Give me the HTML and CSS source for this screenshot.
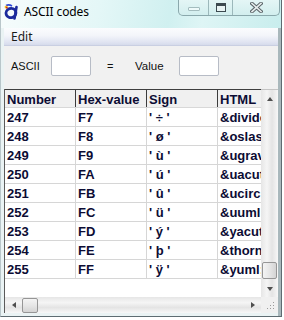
FILE: index.html
```html
<!DOCTYPE html>
<html>
<head>
<meta charset="utf-8">
<link rel="stylesheet" href="styles.css">
</head>
<body>
<div class="window">
  <div class="titlebar">
    <svg class="app-icon" width="18" height="17" viewBox="0 0 18 17">
      <ellipse cx="8" cy="10" rx="5" ry="4.6" transform="rotate(-20 8 10)" fill="none" stroke="#1b2a9c" stroke-width="2.8"/>
      <path d="M13.5 4 L11.5 15.5" stroke="#1b2a9c" stroke-width="2.6" stroke-linecap="round"/>
      <path d="M3 2.5 Q6 1 9 3" stroke="#2c46d8" stroke-width="1.6" fill="none"/>
      <circle cx="3.2" cy="4" r="1.6" fill="#f2c020"/>
      <circle cx="3.8" cy="4.6" r="0.9" fill="#d42020"/>
    </svg>
    <span class="title">ASCII codes</span>
    <div class="caption-btns">
      <div class="cbtn cbtn-min"><span class="min-glyph"></span></div>
      <div class="cbtn cbtn-max"><span class="max-glyph"></span></div>
      <div class="cbtn cbtn-close">
        <svg width="13" height="11" viewBox="0 0 13 11">
          <path d="M2 1.5 L11 9.5 M11 1.5 L2 9.5" stroke="#5a6468" stroke-width="3.6" stroke-linecap="square"/>
          <path d="M2 1.5 L11 9.5 M11 1.5 L2 9.5" stroke="#e8eeee" stroke-width="1.6" stroke-linecap="square"/>
        </svg>
      </div>
    </div>
  </div>
  <div class="frame">
    <div class="menubar"><span class="menu-item">Edit</span></div>
    <div class="form">
      <span class="lbl lbl-ascii">ASCII</span>
      <span class="box"></span>
      <span class="eq">=</span>
      <span class="lbl lbl-value">Value</span>
      <span class="box"></span>
    </div>
    <div class="grid-area">
      <div class="viewport">
        <div class="row head">
          <div class="cell">Number</div><div class="cell">Hex-value</div><div class="cell">Sign</div><div class="cell">HTML</div>
        </div>
        <div class="row"><div class="cell">247</div><div class="cell">F7</div><div class="cell">' ÷ '</div><div class="cell">&amp;divide;</div></div>
        <div class="row"><div class="cell">248</div><div class="cell">F8</div><div class="cell">' ø '</div><div class="cell">&amp;oslash;</div></div>
        <div class="row"><div class="cell">249</div><div class="cell">F9</div><div class="cell">' ù '</div><div class="cell">&amp;ugrave;</div></div>
        <div class="row"><div class="cell">250</div><div class="cell">FA</div><div class="cell">' ú '</div><div class="cell">&amp;uacute;</div></div>
        <div class="row"><div class="cell">251</div><div class="cell">FB</div><div class="cell">' û '</div><div class="cell">&amp;ucirc;</div></div>
        <div class="row"><div class="cell">252</div><div class="cell">FC</div><div class="cell">' ü '</div><div class="cell">&amp;uuml;</div></div>
        <div class="row"><div class="cell">253</div><div class="cell">FD</div><div class="cell">' ý '</div><div class="cell">&amp;yacute;</div></div>
        <div class="row"><div class="cell">254</div><div class="cell">FE</div><div class="cell">' þ '</div><div class="cell">&amp;thorn;</div></div>
        <div class="row"><div class="cell">255</div><div class="cell">FF</div><div class="cell">' ÿ '</div><div class="cell">&amp;yuml;</div></div>
      </div>
      <div class="vscroll">
        <div class="sbtn"><span class="tri-up"></span></div>
        <div class="vtrack"><div class="vthumb"></div></div>
        <div class="sbtn"><span class="tri-down"></span></div>
      </div>
      <div class="hscroll">
        <div class="sbtn-h"><span class="tri-left"></span></div>
        <div class="hthumb"></div>
        <div class="htrack"></div>
        <div class="sbtn-h"><span class="tri-right"></span></div>
      </div>
      <div class="grip">
        <svg width="17" height="16" viewBox="0 0 17 16">
          <g fill="#9a9a9a">
            <rect x="12" y="5" width="1" height="1"/>
            <rect x="9" y="8" width="1" height="1"/><rect x="12" y="8" width="1" height="1"/>
            <rect x="6" y="11" width="1" height="1"/><rect x="9" y="11" width="1" height="1"/><rect x="12" y="11" width="1" height="1"/>
          </g>
        </svg>
      </div>
    </div>
  </div>
</div>
</body>
</html>
```
FILE: styles.css
```css
html, body {
  margin: 0;
  padding: 0;
  background: #ffffff;
}

.window {
  width: 282px;
  height: 317px;
  box-sizing: border-box;
  border-right: 1px solid #5e6c72;
  border-bottom: 1px solid #5e6c72;
  border-left: 1px solid #b9c6ca;
  display: flex;
  flex-direction: column;
  background: #eaf3f4;
}

.titlebar {
  height: 28px;
  flex: none;
  display: flex;
  align-items: flex-start;
  background: linear-gradient(100deg, #f6fcfc 0%, #e4f7f7 35%, #d0f0f0 60%, #def5f5 72%, #c8eded 100%);
}

.app-icon {
  margin: 3px 0 0 2px;
  flex: none;
}

.title {
  font-family: "Noto Sans", sans-serif;
  font-size: 12px;
  line-height: 16px;
  margin: 4px 0 0 3px;
  color: #000;
  letter-spacing: -0.1px;
}

.caption-btns {
  margin-left: auto;
  margin-right: 1px;
  height: 16px;
  display: flex;
  box-sizing: border-box;
  border: 1px solid #8aa8ac;
  border-top: 0;
  border-radius: 0 0 5px 5px;
  background: linear-gradient(#e4f6f6, #d2eeee);
}

.cbtn {
  height: 15px;
  display: flex;
  align-items: center;
  justify-content: center;
  box-sizing: border-box;
}

.cbtn-min {
  width: 30px;
  border-right: 1px solid #9cb8bb;
}

.cbtn-max {
  width: 24px;
  border-right: 1px solid #9cb8bb;
}

.cbtn-close {
  width: 46px;
}

.min-glyph {
  width: 12px;
  height: 4px;
  box-sizing: border-box;
  border: 1px solid #a3bcbe;
  background: #eefafa;
  border-radius: 1px;
  margin-top: 2px;
}

.max-glyph {
  width: 10px;
  height: 9px;
  box-sizing: border-box;
  border: 1px solid #3c4a50;
  border-top-width: 3px;
  background: #e8f4f4;
}

.frame {
  flex: 1;
  display: flex;
  flex-direction: column;
  padding: 0 0 3px 3px;
  border-right: 3px solid #a9b8bc;
  min-height: 0;
}

.menubar {
  height: 18px;
  flex: none;
  box-sizing: border-box;
  display: flex;
  align-items: center;
  padding-left: 7px;
  background: linear-gradient(#fbfcfe 0%, #f3f5fa 45%, #dfe3f1 85%, #d6dbeb 100%);
  border-bottom: 1px solid #c9cfe2;
}

.menu-item {
  font-family: "Noto Sans", sans-serif;
  font-size: 12px;
  color: #1a1a1a;
  line-height: 16px;
}

.form {
  height: 43px;
  flex: none;
  box-sizing: border-box;
  display: flex;
  align-items: center;
  padding: 0 0 3px 7px;
  background: #f1f1f1;
  font-family: "Liberation Sans", Arial, sans-serif;
  font-size: 11px;
  color: #111;
}

.lbl-ascii {
  width: 40px;
}

.box {
  width: 40px;
  height: 20px;
  box-sizing: border-box;
  border: 1px solid #b7bcc6;
  border-radius: 2px;
  background: #ffffff;
}

.eq {
  width: 28px;
  margin-left: 16px;
}

.lbl-value {
  width: 44px;
  font-size: 11.5px;
}

.grid-area {
  flex: 1;
  display: grid;
  grid-template-columns: 256px 17px;
  grid-template-rows: 208px 16px;
  border-left: 1px solid #5a5a5a;
  background: #f1f1f1;
}

.viewport {
  overflow: hidden;
  background: #ffffff;
  border-top: 1px solid #3f3f3f;
  font-family: "Liberation Sans", Arial, sans-serif;
  font-size: 13px;
  font-weight: bold;
  color: #0c0c34;
}

.row {
  display: grid;
  grid-template-columns: 71px 71px 71px 80px;
  height: 19px;
  box-sizing: border-box;
  border-bottom: 1px solid #d6d6d6;
}

.row.head {
  height: 18px;
  background: #f0f0f0;
  border-bottom: 1px solid #d8d8d8;
}

.cell {
  padding: 1px 0 0 2px;
  line-height: 17px;
  white-space: nowrap;
  overflow: hidden;
  border-right: 1px solid #d6d6d6;
}

.row.head .cell {
  padding-top: 2px;
  line-height: 15px;
  border-right: 1px solid #3c3c3c;
}

.vscroll {
  display: flex;
  flex-direction: column;
  border-top: 1px solid #c4c4c4;
  background: linear-gradient(to right, #e6e6e6 0%, #f5f5f5 35%, #e4e4e4 65%, #f7f7f7 100%);
}

.sbtn {
  height: 17px;
  flex: none;
  display: flex;
  align-items: center;
  justify-content: center;
}

.vtrack {
  flex: 1;
  display: flex;
  flex-direction: column;
  justify-content: flex-end;
  align-items: center;
}

.vthumb {
  width: 15px;
  height: 17px;
  box-sizing: border-box;
  border: 1px solid #969696;
  border-radius: 2px;
  background: linear-gradient(to right, #f4f4f4, #e6e6e6 50%, #d4d4d4);
  margin-bottom: 1px;
}

.tri-up, .tri-down, .tri-left, .tri-right {
  width: 0;
  height: 0;
  border: 3px solid transparent;
}

.tri-up {
  border-bottom: 4px solid #4e4e4e;
  border-top-width: 0;
}

.tri-down {
  border-top: 4px solid #4e4e4e;
  border-bottom-width: 0;
}

.tri-left {
  border-right: 4px solid #4e4e4e;
  border-left-width: 0;
}

.tri-right {
  border-left: 4px solid #4e4e4e;
  border-right-width: 0;
}

.hscroll {
  display: flex;
  align-items: center;
  background: linear-gradient(#e6e6e6 0%, #f5f5f5 35%, #e4e4e4 65%, #f7f7f7 100%);
}

.sbtn-h {
  width: 17px;
  height: 16px;
  flex: none;
  display: flex;
  align-items: center;
  justify-content: center;
}

.hthumb {
  width: 16px;
  height: 15px;
  flex: none;
  box-sizing: border-box;
  border: 1px solid #969696;
  border-radius: 2px;
  background: linear-gradient(#f4f4f4, #e6e6e6 50%, #d4d4d4);
}

.htrack {
  flex: 1;
}

.grip {
  background: #f0f0f0;
}

.grip svg {
  display: block;
}
```
